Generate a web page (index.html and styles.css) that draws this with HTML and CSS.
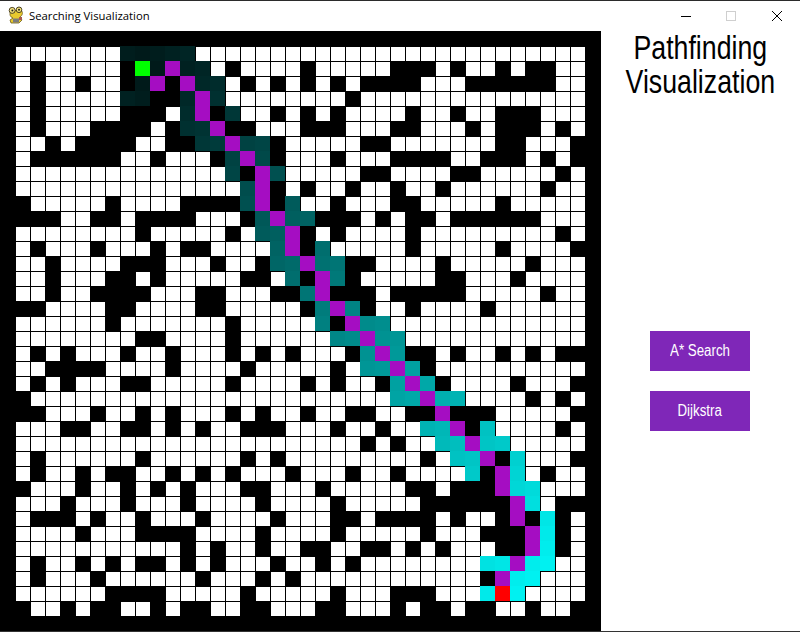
FILE: index.html
```html
<!DOCTYPE html>
<html>

<head>
    <title>Searching Visualization</title>
    <link rel="stylesheet" href="styles.css">
</head>

<body>
    <div class="window">
        <div class="titlebar">
            <svg class="appicon" width="16" height="18" viewBox="0 0 16 18">
                <path d="M3 5 C1 8 2 11 5 12 L2 14 L3 17 L11 17 L14 14 L12 11 C15 9 15 6 13 4 Z" fill="#e8c92e" stroke="#6b5a1c" stroke-width="0.8"/>
                <circle cx="4.2" cy="4.4" r="3" fill="#f4e27a" stroke="#4a4020" stroke-width="1"/>
                <circle cx="11" cy="3.8" r="2.8" fill="#f4e27a" stroke="#4a4020" stroke-width="1"/>
                <circle cx="4.4" cy="4.4" r="1" fill="#222"/>
                <circle cx="11" cy="3.8" r="1" fill="#222"/>
                <rect x="5" y="12.5" width="6" height="4" fill="#7c7c7c"/>
                <rect x="11" y="11" width="3" height="3" fill="#a85a50"/>
            </svg>
            <span class="wintitle">Searching Visualization</span>
            <div class="controls">
                <svg class="ctl" width="46" height="30" viewBox="0 0 46 30"><path d="M19 15.5 H29" stroke="#000" fill="none"/></svg>
                <svg class="ctl" width="46" height="30" viewBox="0 0 46 30"><rect x="18.5" y="10.5" width="9" height="9" stroke="#cfcfcf" fill="none"/></svg>
                <svg class="ctl" width="46" height="30" viewBox="0 0 46 30"><path d="M18 10 L28 20 M28 10 L18 20" stroke="#000" fill="none"/></svg>
            </div>
        </div>
        <div class="main">
            <div id="board" class="board"></div>
            <div class="side">
                <h1 class="heading">Pathfinding<br>Visualization</h1>
                <button class="algo"><span class="narrow">A* Search</span></button>
                <button class="algo"><span class="narrow">Dijkstra</span></button>
            </div>
        </div>
    </div>
    <script src="script.js"></script>
</body>

</html>
```
FILE: styles.css
```css
html,
body {
    margin: 0;
    background-color: white;
}

.window {
    width: 800px;
    height: 632px;
    overflow: hidden;
    display: flex;
    flex-direction: column;
}

.titlebar {
    height: 30px;
    flex: none;
    border-top: 1px solid #2b2b2b;
    display: flex;
    align-items: center;
    background-color: white;
}

.appicon {
    margin-left: 8px;
    margin-right: 5px;
    margin-bottom: 2px;
}

.wintitle {
    font-family: "Open Sans", "Noto Sans", sans-serif;
    font-size: 11.3px;
    color: #000;
    margin-bottom: 2px;
}

.controls {
    margin-left: auto;
    display: flex;
}

.ctl {
    display: block;
}

.main {
    display: flex;
    height: 600px;
    border-bottom: 1px solid #333;
}

.board {
    display: grid;
    grid-template-columns: repeat(40, 15px);
    grid-template-rows: repeat(40, 15px);
    background-color: black;
    padding-right: 1px;
    flex: none;
}

.cell {
    box-sizing: border-box;
}

.open {
    background-color: white;
    background-clip: content-box;
    padding: 1px 0 0 1px;
}

.path {
    background-color: #a50dc2;
}

.start {
    background-color: #00ff00;
}

.end {
    background-color: #ff0000;
}

.side {
    flex: 1;
    display: flex;
    flex-direction: column;
    align-items: center;
}

.heading {
    margin: 0 0 232px 0;
    height: 68px;
    font-family: "Liberation Sans", sans-serif;
    font-weight: normal;
    font-size: 33px;
    line-height: 34px;
    text-align: center;
    color: #000;
    transform: scaleX(0.81);
}

.algo {
    width: 100px;
    height: 40px;
    margin-bottom: 20px;
    margin-right: 1px;
    border: none;
    padding: 0;
    background-color: #7f27b8;
    color: white;
    font-family: "Liberation Sans", sans-serif;
    font-size: 16px;
}

.narrow {
    display: inline-block;
    transform: scaleX(0.83);
}
```
FILE: script.js
```js
var rows = [
    "########################################",
    "#.......vvvvv..........................#",
    "#.#.....#Svpvv.#....#.....###.#..#.##..#",
    "#.#..#..#vp#pvv.#.#.#.#.####...######..#",
    "#.#.....vv##vpv........#...............#",
    "#.#.....###.vp#v..#.#.#....#..#..###...#",
    "#.#...####.#vvp##...###...##...#.###.#.#",
    "#..#.####..##vvpvv#.....##.......##...##",
    "#.######..#...#vpv#...#...####..###.#.##",
    "#..............v#pv.....##....##.....#.#",
    "#...............vp#.#..#..#..#......#..#",
    "##.....#....####vp#v..#...##.....#.....#",
    "####..##.####...#vpvv###.#.##.######...#",
    "#........#.....#.vvp#.#....#.........#.#",
    "#.#...#...#.##....vp#v.....#.....#....##",
    "#..#....###...#..#vvpvv##....#.....#...#",
    "#..#...##.#.....##.v#pv#.....##...#....#",
    "#..#..####...##...##vp###.#####.....#..#",
    "###....##....##.....#vpv#..#....#......#",
    "#......#.......#.....v#pvv.............#",
    "#........##....#......vvpvv............#",
    "#.#.#...#..#...#.#.#...#vpv##.#..#.#.###",
    "#..####....#....#.....#.vvpv#..........#",
    "#.#.#...##.....#....#.#..#vpv#....#...##",
    "##........................vvpvv....#.#.#",
    "###...#..#.#...#.#..#..##..##p###.....##",
    "#...##..##.#.#..###...#..#..vvp#v....#.#",
    "#.......................#.#..vvpvv.....#",
    "#.#......#......#.#.........#.vvp#v...##",
    "#.#..#.##..#.#.#...#...#..#....v#pv.#..#",
    "##...#..#.#.#...##...#.....##.###pvv...#",
    "#...#...#...#....#....#.....######pv.###",
    "#.###.#..#...#....#...##.####.#..#p#v#.#",
    "#....#...####....#....#.....#...###pv#.#",
    "#...........#.#..#..##..##.#.#...##pv#.#",
    "#.#..#.#.##.#.#...#..#.#........vvpvv..#",
    "#.#...#......#...#.#............#pvv...#",
    "#......####.....#.....#...###...vEv....#",
    "##..#.##..#.##..##...##...#.##.##..#..##",
    "########################################"
];

// visited cells get lighter the further they are from the start (row 2, col 9)
function seenColor(r, c) {
    var dist = Math.abs(r - 2) + Math.abs(c - 9);
    var g = Math.round(22 + 3.65 * dist);
    return "rgb(0," + g + "," + g + ")";
}

var board = document.getElementById("board");
var classes = { ".": "open", "p": "path", "S": "start", "E": "end" };

for (var r = 0; r < rows.length; r++) {
    for (var c = 0; c < 40; c++) {
        var ch = rows[r].charAt(c);
        var cell = document.createElement("div");
        cell.className = "cell";
        if (classes[ch]) {
            cell.className += " " + classes[ch];
        }
        if (ch == "v") {
            cell.style.backgroundColor = seenColor(r, c);
        }
        board.appendChild(cell);
    }
}
```
